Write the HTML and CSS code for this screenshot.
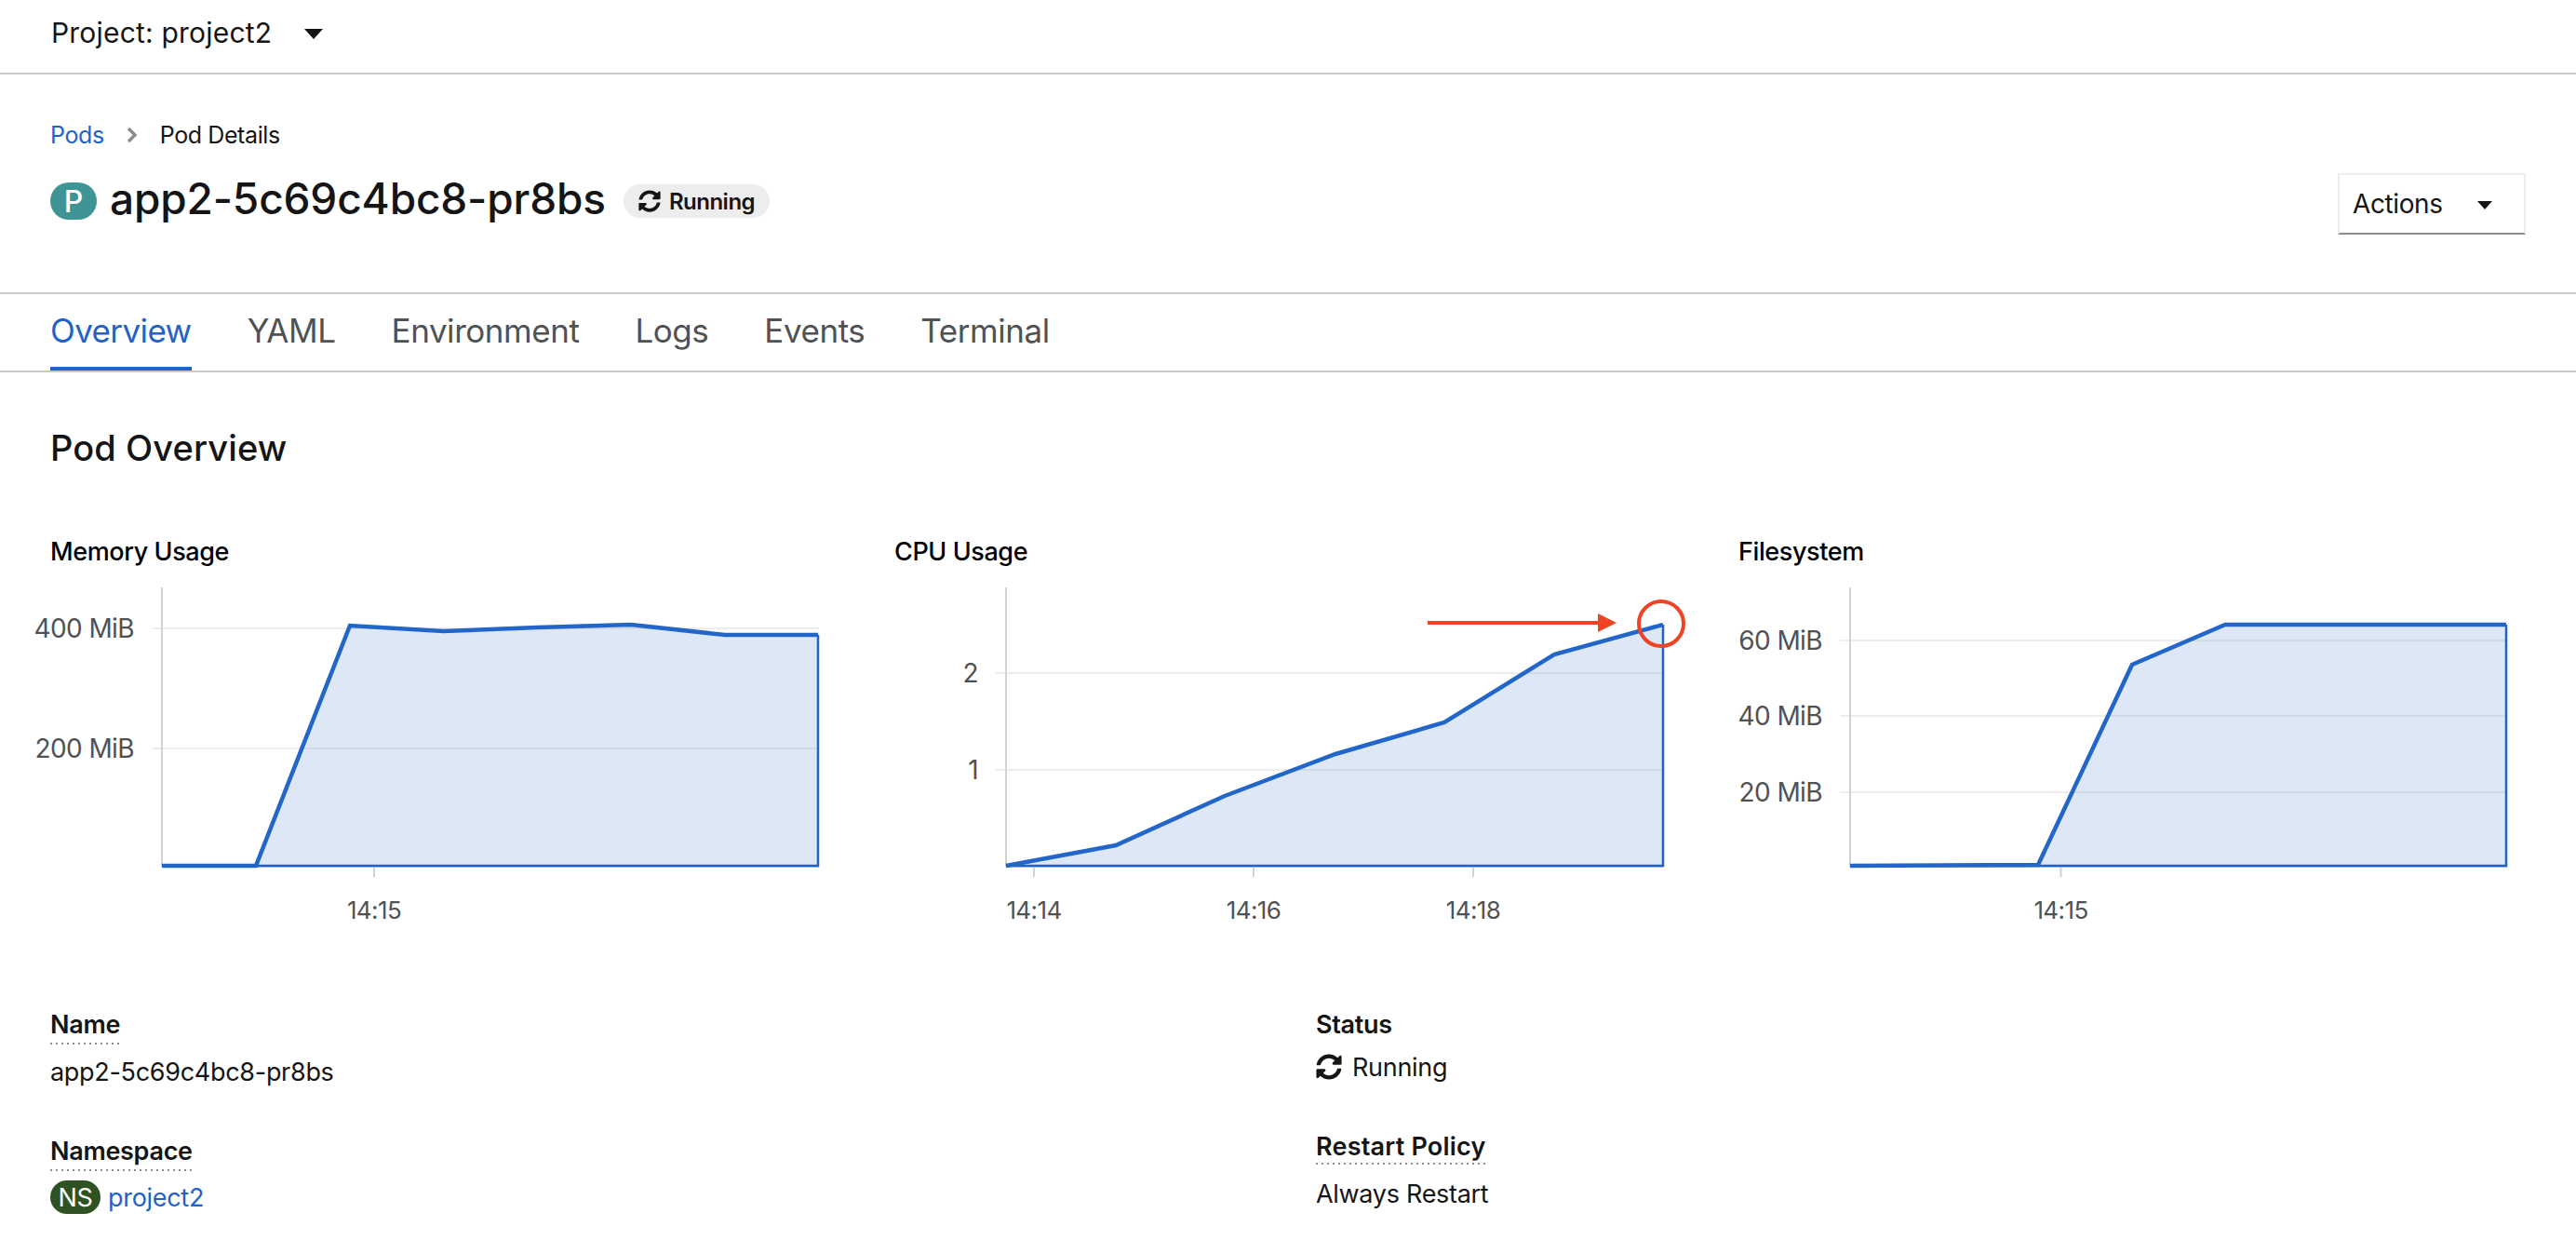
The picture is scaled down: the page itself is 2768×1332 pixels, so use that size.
FILE: index.html
```html
<!DOCTYPE html>
<html lang="en">
<head>
  <meta charset="UTF-8" />
  <title>Pod Details</title>
  <link rel="stylesheet" href="styles.css">
</head>
<body>
  <svg class="icon-defs" width="0" height="0">
    <symbol id="sync" viewBox="0 0 512 512">
      <path d="M370.72 133.28C339.458 104.008 298.888 87.962 255.848 88c-77.458.068-144.328 53.178-162.791 126.85-1.344 5.363-6.122 9.15-11.651 9.15H24.103c-7.498 0-13.194-6.807-11.807-14.176C33.933 94.924 134.813 8 256 8c66.448 0 126.791 26.136 171.315 68.685L463.03 40.97C478.149 25.851 504 36.559 504 57.941V192c0 13.255-10.745 24-24 24H345.941c-21.382 0-32.09-25.851-16.971-40.971l41.75-41.749zM32 296h134.059c21.382 0 32.09 25.851 16.971 40.971l-41.75 41.75c31.262 29.273 71.835 45.319 114.876 45.28 77.418-.07 144.315-53.144 162.787-126.849 1.344-5.363 6.122-9.15 11.651-9.15h57.304c7.498 0 13.194 6.807 11.807 14.176C478.067 417.076 377.187 504 256 504c-66.448 0-126.791-26.136-171.315-68.685L48.97 471.03C33.851 486.149 8 475.441 8 454.059V320c0-13.255 10.745-24 24-24z"/>
    </symbol>
  </svg>

  <div class="project-bar">
    <span class="project-name">Project: project2</span>
    <span class="caret caret-project"></span>
  </div>

  <header class="page-head">
    <nav class="crumbs">
      <a class="link" href="#">Pods</a>
      <svg class="crumb-sep" viewBox="0 0 11 18"><path d="M2 2l7 7-7 7" fill="none" stroke="#8a8d90" stroke-width="3.4"/></svg>
      <span>Pod Details</span>
    </nav>
    <div class="title-row">
      <div class="title">
        <span class="res-icon res-pod">P</span>
        <h1>app2-5c69c4bc8-pr8bs</h1>
        <span class="status-pill"><svg class="sync sync-small"><use href="#sync"/></svg>Running</span>
      </div>
      <button class="actions">Actions<span class="caret caret-actions"></span></button>
    </div>
  </header>

  <nav class="tabs">
    <a class="tab active" href="#">Overview</a>
    <a class="tab" href="#">YAML</a>
    <a class="tab" href="#">Environment</a>
    <a class="tab" href="#">Logs</a>
    <a class="tab" href="#">Events</a>
    <a class="tab" href="#">Terminal</a>
  </nav>

  <main class="content">
    <h2>Pod Overview</h2>

    <div class="charts">
      <section class="chart">
        <h3>Memory Usage</h3>
        <svg class="plot" width="846" height="380" viewBox="0 0 846 380">
          <path class="area" d="M120 310H221L322 52L422.500 58L523.500 54L624 51L725 62H825V310Z"/>
          <path class="grid" d="M110 55H826M110 184H826"/>
          <path class="axis" d="M120 11V311M120 311H826M348 311V322"/>
          <path class="edge" d="M120 310H825V62"/>
          <path class="line" d="M120 310H221L322 52L422.500 58L523.500 54L624 51L725 62H825"/>
          <text class="y-label" x="90" y="65">400 MiB</text>
          <text class="y-label" x="90" y="194">200 MiB</text>
          <text class="x-label" x="348" y="367">14:15</text>
        </svg>
      </section>

      <section class="chart">
        <h3>CPU Usage</h3>
        <svg class="plot" width="846" height="380" viewBox="0 0 846 380">
          <path class="area" d="M120 310L238 288L355 235L474 190L591 156L709 83L826 51V310Z"/>
          <path class="grid" d="M109 103H826M109 207H826"/>
          <path class="axis" d="M120 11V311M120 311H826M150 311V322M386 311V322M622 311V322"/>
          <path class="edge" d="M120 310H826V51"/>
          <path class="line" d="M120 310L238 288L355 235L474 190L591 156L709 83L826 51"/>
          <text class="y-label" x="90" y="113">2</text>
          <text class="y-label" x="90" y="217">1</text>
          <text class="x-label" x="150" y="367">14:14</text>
          <text class="x-label" x="386" y="367">14:16</text>
          <text class="x-label" x="622" y="367">14:18</text>
          <!-- the annotation drawn on the screenshot -->
          <path class="mark" d="M573 49H760"/>
          <path class="mark-head" d="M756 39L776 49L756 59Z"/>
          <circle class="mark-ring" cx="824" cy="50" r="24"/>
        </svg>
      </section>

      <section class="chart">
        <h3>Filesystem</h3>
        <svg class="plot" width="846" height="380" viewBox="0 0 846 380">
          <path class="area" d="M120 310L322 309L423 94L523 51H825V310Z"/>
          <path class="grid" d="M109 68H825M109 149H825M109 231H825"/>
          <path class="axis" d="M120 11V311M120 311H826M346.500 311V322"/>
          <path class="edge" d="M120 310H825V51"/>
          <path class="line" d="M120 310L322 309L423 94L523 51H825"/>
          <text class="y-label" x="90" y="78">60 MiB</text>
          <text class="y-label" x="90" y="159">40 MiB</text>
          <text class="y-label" x="90" y="241">20 MiB</text>
          <text class="x-label" x="346.500" y="367">14:15</text>
        </svg>
      </section>
    </div>

    <div class="details">
      <dl class="detail-col">
        <dt class="has-help"><span>Name</span></dt>
        <dd class="name-value">app2-5c69c4bc8-pr8bs</dd>
        <dt class="has-help"><span>Namespace</span></dt>
        <dd class="ns-value"><span class="res-icon res-ns">NS</span><a class="link" href="#">project2</a></dd>
      </dl>
      <dl class="detail-col">
        <dt class="plain">Status</dt>
        <dd class="status-value"><svg class="sync"><use href="#sync"/></svg>Running</dd>
        <dt class="has-help policy"><span>Restart Policy</span></dt>
        <dd class="policy-value">Always Restart</dd>
      </dl>
    </div>
  </main>
</body>
</html>
```

FILE: styles.css
```css
* {
  box-sizing: border-box;
}
html, body {
  margin: 0;
  padding: 0;
  height: 1332px;
  overflow: hidden;
}
body {
  font-family: Inter, "Noto Sans", sans-serif;
  font-size: 27px;
  color: #151515;
  background-color: white;
}
a {
  text-decoration: none;
}
.link {
  color: #1f62c8;
}
.icon-defs {
  display: block;
  height: 0;
}
.caret {
  display: inline-block;
  width: 0;
  height: 0;
  border-left: 10px solid transparent;
  border-right: 10px solid transparent;
  border-top: 11px solid #151515;
}

.project-bar {
  height: 80px;
  padding: 0 54px 8px 55px;
  border-bottom: 2px solid #c9c9c9;
  display: flex;
  align-items: center;
  font-size: 30px;
  letter-spacing: 0.2px;
}
.caret-project {
  margin-left: 35px;
  margin-top: 2px;
}

.page-head {
  height: 236px;
  padding: 50px 54px 0;
  border-bottom: 2px solid #c9c9c9;
}
.crumbs {
  height: 30px;
  display: flex;
  align-items: center;
  font-size: 25px;
  letter-spacing: -0.4px;
}
.crumb-sep {
  width: 11px;
  height: 18px;
  margin: 0 25px 0 24px;
}
.title-row {
  margin-top: 26px;
  display: flex;
  justify-content: space-between;
  align-items: flex-start;
}
.title {
  height: 60px;
  display: flex;
  align-items: center;
}
.title h1 {
  margin: 0 0 7px 14px;
  font-size: 46px;
  font-weight: 500;
  letter-spacing: -0.15px;
}
.res-icon {
  display: inline-flex;
  justify-content: center;
  align-items: center;
  border-radius: 20px;
  color: white;
}
.res-pod {
  width: 50px;
  height: 40px;
  background-color: #3f9595;
  font-size: 32px;
  font-weight: 500;
}
.status-pill {
  height: 36px;
  margin-left: 19px;
  padding: 0 16px;
  border-radius: 18px;
  background-color: #ededed;
  display: flex;
  align-items: center;
  font-size: 24px;
  font-weight: 600;
  letter-spacing: -0.5px;
}
.sync {
  width: 28px;
  height: 28px;
  fill: #151515;
  flex: none;
}
.sync-small {
  width: 24px;
  height: 24px;
  margin-right: 9px;
}
.actions {
  width: 202px;
  height: 66px;
  padding: 0 0 0 14px;
  background-color: white;
  border: 2px solid #ededed;
  border-bottom-color: #8a8d90;
  font-family: inherit;
  font-size: 28px;
  letter-spacing: -0.4px;
  color: #151515;
  display: flex;
  align-items: center;
}
.caret-actions {
  margin-left: 37px;
  margin-top: 3px;
  border-left-width: 8px;
  border-right-width: 8px;
  border-top-width: 9px;
}

.tabs {
  height: 84px;
  padding: 0 54px;
  border-bottom: 2px solid #c9c9c9;
  display: flex;
  gap: 60px;
}
.tab {
  height: 82px;
  padding-bottom: 4px;
  display: flex;
  align-items: center;
  font-size: 35px;
  letter-spacing: -0.45px;
  color: #4f5255;
}
.tab.active {
  color: #1f62c8;
  border-bottom: 4px solid #1f62c8;
  padding-bottom: 0;
  letter-spacing: -0.6px;
}

.content {
  padding: 0 54px;
}
.content h2 {
  margin: 0;
  padding-top: 58px;
  height: 166px;
  font-size: 38px;
  font-weight: 500;
  letter-spacing: 0.1px;
}
.charts {
  display: grid;
  grid-template-columns: repeat(3, 1fr);
  gap: 61px;
}
.chart h3 {
  margin: 0;
  height: 54px;
  line-height: 54px;
  font-size: 27px;
  font-weight: 500;
  letter-spacing: -0.4px;
  color: black;
}
.plot {
  display: block;
  overflow: visible;
}
.area {
  fill: #dee7f5;
}
.grid {
  fill: none;
  stroke: rgba(150, 150, 150, 0.17);
  stroke-width: 2;
}
.axis {
  fill: none;
  stroke: #d2d2d2;
  stroke-width: 2;
}
.edge {
  fill: none;
  stroke: #1f62c8;
  stroke-width: 2.5;
}
.line {
  fill: none;
  stroke: #2266c9;
  stroke-width: 4.5;
}
.y-label, .x-label {
  font-size: 26px;
  letter-spacing: -0.6px;
  fill: #4f5255;
}
.y-label {
  font-size: 28px;
  text-anchor: end;
}
.x-label {
  text-anchor: middle;
}
.mark {
  fill: none;
  stroke: #ee4425;
  stroke-width: 4;
}
.mark-head {
  fill: #ee4425;
}
.mark-ring {
  fill: none;
  stroke: #ee4425;
  stroke-width: 4;
}

.details {
  margin-top: 80px;
  display: grid;
  grid-template-columns: 1300px 1300px;
  gap: 60px;
}
.detail-col {
  margin: 0;
}
.detail-col dt {
  height: 42px;
  line-height: 41px;
  font-size: 27px;
  font-weight: 600;
  letter-spacing: -0.3px;
}
.has-help span {
  display: inline-block;
  height: 42px;
  background: linear-gradient(to right, #8a8d90 2px, transparent 2px) repeat-x left bottom / 6px 2px;
}
.detail-col dd {
  margin: 0;
  height: 36px;
  display: flex;
  align-items: center;
  letter-spacing: -0.3px;
}
.detail-col .name-value {
  margin-top: 11px;
}
.detail-col dd + dt {
  margin-top: 47px;
}
.detail-col .ns-value {
  margin-top: 10px;
}
.res-ns {
  width: 54px;
  height: 36px;
  margin-right: 8px;
  background-color: #2e5221;
  font-size: 27px;
}
.detail-col .status-value {
  margin-top: 6px;
}
.status-value .sync {
  margin-right: 11px;
}
.detail-col dd + .policy {
  margin-top: 47px;
  letter-spacing: 0.2px;
}
.policy span {
  height: 40px;
}
.detail-col .policy-value {
  margin-top: 11px;
}
```
